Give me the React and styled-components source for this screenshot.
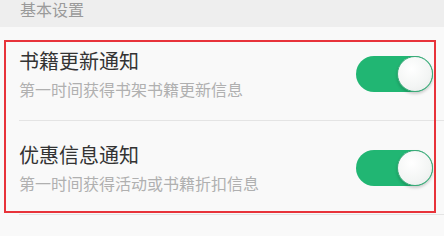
import React from "react";
import styled, { createGlobalStyle } from "styled-components";

const Global = createGlobalStyle`
body{margin:0;background:#f9f9f9;font-family:"Noto Sans CJK SC","Noto Sans",sans-serif;}
`;
const Page = styled.div`
position:relative;
width:444px;
height:236px;
overflow:hidden;
background:#f9f9f9;
`;
const Header = styled.div`
height:27px;
background:#eeeeee;
padding-left:20px;
box-sizing:border-box;
font-size:16px;
line-height:18px;
color:#9a9a9a;
`;
const Row = styled.div`
display:flex;
align-items:center;
justify-content:space-between;
height:94px;
margin-left:19px;
padding-right:11px;
border-bottom:1px solid #e4e4e4;
box-sizing:border-box;
`;
const TextCol = styled.div`
display:flex;
flex-direction:column;
gap:2px;
`;
const Title = styled.span`
font-size:20px;
line-height:28px;
color:#333;
`;
const Sub = styled.span`
font-size:16px;
line-height:24px;
color:#b0b0b0;
`;
const Track = styled.div`
width:77px;
height:36px;
border-radius:18px;
background:${p => (p.on ? "#21b673" : "#ddd")};
display:flex;
justify-content:${p => (p.on ? "flex-end" : "flex-start")};
align-items:center;
`;
const Knob = styled.div`
width:36px;
height:36px;
border-radius:50%;
box-sizing:border-box;
border:1.5px solid #3fa97a;
background:radial-gradient(circle at 40% 35%,#ffffff 0%,#f3f5f4 60%,#e6e9e8 100%);
box-shadow:0 2px 3px rgba(0,0,0,0.18);
`;
const Highlight = styled.div`
position:absolute;
left:4px;
top:40px;
width:432px;
height:173px;
border:2px solid #e8333a;
box-sizing:border-box;
pointer-events:none;
`;

const Toggle = ({ on }) => (
  <Track on={on}>
    <Knob />
  </Track>
);

const items = [
  { title: "书籍更新通知", sub: "第一时间获得书架书籍更新信息" },
  { title: "优惠信息通知", sub: "第一时间获得活动或书籍折扣信息" },
];

const App = () => {
  return (
    <Page>
      <Global />
      <Header>基本设置</Header>
      {items.map(it => (
        <Row key={it.title}>
          <TextCol>
            <Title>{it.title}</Title>
            <Sub>{it.sub}</Sub>
          </TextCol>
          <Toggle on />
        </Row>
      ))}
      <Highlight />
    </Page>
  );
};

export default App;
